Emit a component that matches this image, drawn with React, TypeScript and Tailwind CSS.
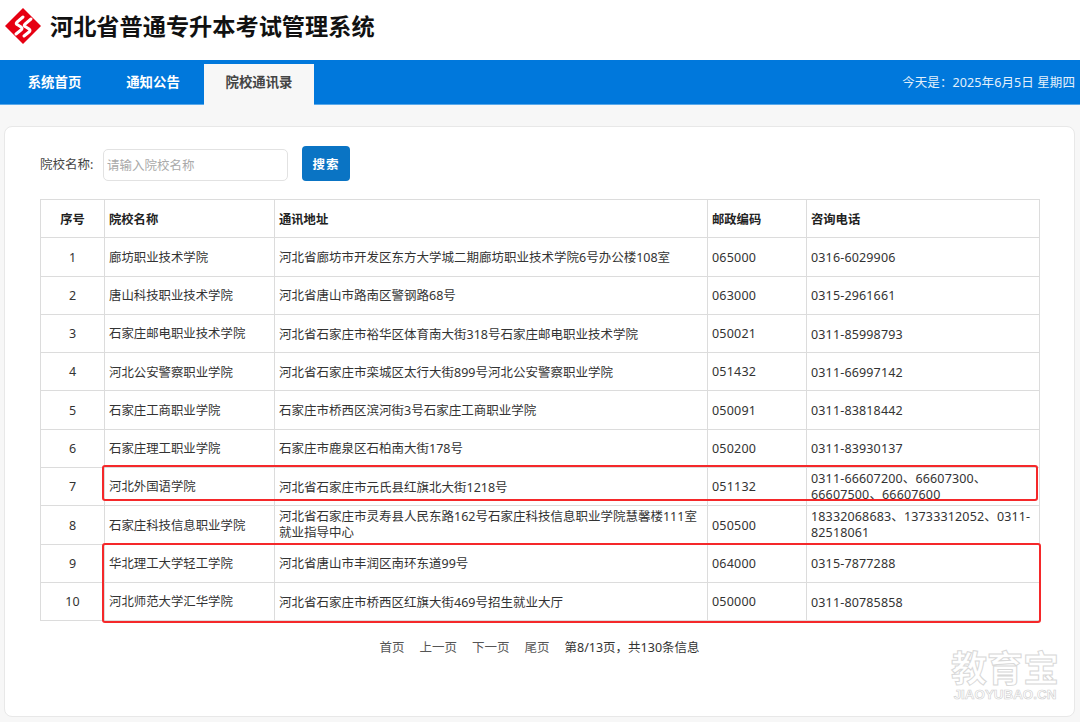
import React from 'react';

const rows = [
  ['1', '廊坊职业技术学院', '河北省廊坊市开发区东方大学城二期廊坊职业技术学院6号办公楼108室', '065000', '0316-6029906'],
  ['2', '唐山科技职业技术学院', '河北省唐山市路南区警钢路68号', '063000', '0315-2961661'],
  ['3', '石家庄邮电职业技术学院', '河北省石家庄市裕华区体育南大街318号石家庄邮电职业技术学院', '050021', '0311-85998793'],
  ['4', '河北公安警察职业学院', '河北省石家庄市栾城区太行大街899号河北公安警察职业学院', '051432', '0311-66997142'],
  ['5', '石家庄工商职业学院', '石家庄市桥西区滨河街3号石家庄工商职业学院', '050091', '0311-83818442'],
  ['6', '石家庄理工职业学院', '石家庄市鹿泉区石柏南大街178号', '050200', '0311-83930137'],
  ['7', '河北外国语学院', '河北省石家庄市元氏县红旗北大街1218号', '051132', '0311-66607200、66607300、66607500、66607600'],
  ['8', '石家庄科技信息职业学院', '河北省石家庄市灵寿县人民东路162号石家庄科技信息职业学院慧馨楼111室就业指导中心', '050500', '18332068683、13733312052、0311-82518061'],
  ['9', '华北理工大学轻工学院', '河北省唐山市丰润区南环东道99号', '064000', '0315-7877288'],
  ['10', '河北师范大学汇华学院', '河北省石家庄市桥西区红旗大街469号招生就业大厅', '050000', '0311-80785858'],
];

const headers = ['序号', '院校名称', '通讯地址', '邮政编码', '咨询电话'];

function Logo() {
  return (
    <svg width="38" height="38" viewBox="0 0 38 38" className="shrink-0">
      <path d="M19 1 L37 19 L19 37 L1 19 Z" fill="#e60012" />
      <path d="M19 10 L13 15 Q11 17 14 18 L17 20 Q19 21.5 17 23 L12 27" fill="none" stroke="#fff" strokeWidth="3" strokeLinecap="round" />
      <path d="M27 12 L21 17 Q19 19 22 20 L25 22 Q27 23.5 25 25 L20 29" fill="none" stroke="#fff" strokeWidth="3" strokeLinecap="round" />
    </svg>
  );
}

export default function App() {
  return (
    <div className="relative w-[1080px] h-[722px] overflow-hidden bg-[#f7f7f7] text-[12.5px] text-[#333] font-['Noto_Sans','Noto_Sans_CJK_SC',sans-serif]">
      <div className="h-[60px] bg-white flex items-center pl-[4px] pb-[9px] gap-[8px]">
        <Logo />
        <h1 className="text-[23.2px] font-bold text-[#111] font-['Noto_Sans_CJK_SC',sans-serif]">河北省普通专升本考试管理系统</h1>
      </div>

      <div className="h-[45px] bg-[#0078dc] border-b border-[#5aa9ea] flex items-end justify-between text-white">
        <div className="flex items-end h-full text-[13.4px] font-bold">
          <a className="w-[103px] h-[44px] pl-[6px] flex items-center justify-center">系统首页</a>
          <a className="w-[99px] h-[44px] pl-[1px] flex items-center justify-center">通知公告</a>
          <a className="ml-[2px] -mb-px w-[110px] h-[41px] pb-[4px] flex items-center justify-center bg-[#f7f7f7] text-[#444]">院校通讯录</a>
        </div>
        <div className="h-[44px] flex items-center pt-[3px] pr-[5px] text-[#e3f0fb] tracking-[0.1px]">今天是：2025年6月5日 星期四</div>
      </div>

      <div className="mt-[21px] ml-[4px] w-[1071px] h-[591px] bg-white border border-[#e8e8e8] rounded-[8px] pl-[35px]">
        <div className="flex items-center h-[72px] pt-[1px]">
          <span className="w-[63px] pt-[3px] text-[#444]">院校名称:</span>
          <input
            placeholder="请输入院校名称"
            className="w-[185px] h-[32px] mt-[2px] pl-[3px] pt-[1px] border border-[#e2e2e2] rounded-[5px] bg-white text-[12.5px] placeholder:text-[#aaa] outline-none"
          />
          <button className="ml-[14px] -mt-[1px] w-[48px] h-[35px] pt-[4px] bg-[#0a74c4] rounded-[4px] text-white font-bold tracking-[1px]">搜索</button>
        </div>

        <table className="table-fixed border-collapse w-[999px] border border-[#dcdcdc]">
          <colgroup>
            <col className="w-[64px]" />
            <col className="w-[170px]" />
            <col className="w-[433px]" />
            <col className="w-[99px]" />
            <col className="w-[233px]" />
          </colgroup>
          <thead>
            <tr className="h-[38.3px]">
              {headers.map((h, i) => (
                <th key={h} className={'border border-[#dcdcdc] px-[4px] pt-[3px] text-[12.3px] font-bold text-[#222] ' + (i === 0 ? 'text-center' : 'text-left')}>{h}</th>
              ))}
            </tr>
          </thead>
          <tbody>
            {rows.map((r) => {
              // 7、8 两行的长文字会折行
              const wrapped = r[0] === '7' || r[0] === '8';
              return (
                <tr key={r[0]} className="h-[38.3px]">
                  <td className="border border-[#dcdcdc] pt-[2px] text-center">{r[0]}</td>
                  <td className="border border-[#dcdcdc] px-[4px] pt-[2px] text-[12.4px]">{r[1]}</td>
                  <td className={'border border-[#dcdcdc] px-[4px] leading-[16px] ' + (r[0] === '8' ? 'pt-0' : 'pt-[2px]')}>{r[2]}</td>
                  <td className="border border-[#dcdcdc] px-[4px] pt-[2px] tracking-[0.2px]">{r[3]}</td>
                  <td className={'border border-[#dcdcdc] px-[4px] leading-[16px] tracking-[0.15px] ' + (wrapped ? 'pt-0' : 'pt-[2px]')}>{r[4]}</td>
                </tr>
              );
            })}
          </tbody>
        </table>

        <div className="w-[999px] mt-[18px] flex justify-center gap-[15px] text-[#555]">
          <a>首页</a>
          <a>上一页</a>
          <a>下一页</a>
          <a>尾页</a>
          <span className="text-[#333]">第8/13页，共130条信息</span>
        </div>
      </div>

      {/* 红框标注 */}
      <div className="absolute left-[102px] top-[465px] w-[936px] h-[36px] border-2 border-[#f5282a] rounded-[3px]" />
      <div className="absolute left-[102px] top-[543px] w-[939px] h-[80px] border-2 border-[#f5282a] rounded-[3px]" />

      {/* 水印 */}
      <div className="absolute left-[950px] top-[648px] w-[110px] text-center text-white font-bold font-['Noto_Sans_CJK_SC',sans-serif]">
        <div className="text-[36px] leading-[36px] [-webkit-text-stroke:1px_#d8d8d8]">教育宝</div>
        <div className="text-[13.4px] leading-[14px] mt-[4px] whitespace-nowrap font-['Liberation_Sans',sans-serif] [-webkit-text-stroke:0.6px_#cfcfcf]">JIAOYUBAO.CN</div>
      </div>
    </div>
  );
}
